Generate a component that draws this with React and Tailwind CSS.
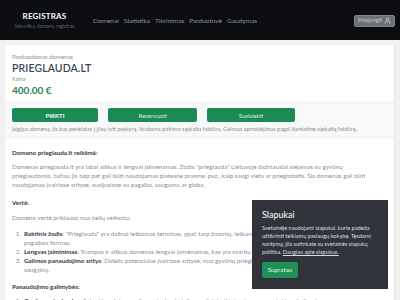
import React from "react";

function UserIcon() {
  return (
    <svg width="7" height="7" viewBox="0 0 16 16" fill="none" stroke="currentColor" strokeWidth="2">
      <circle cx="8" cy="5" r="3" />
      <path d="M2.5 15v-1.5a4 4 0 0 1 4-4h3a4 4 0 0 1 4 4V15" />
    </svg>
  );
}

function Item({ n, term, text, cont }) {
  return (
    <div className="flex">
      <span className="w-[12px] shrink-0 text-right pr-[3px]">{n}.</span>
      <div>
        <span className="font-bold text-[#2f3a48]">{term}</span>: {text}
        {cont && <div>{cont}</div>}
      </div>
    </div>
  );
}

export default function App() {
  return (
    <div
      className="w-[400px] h-[300px] overflow-hidden bg-[#f1f1ef] relative"
      style={{ fontFamily: "Lato, 'Noto Sans', sans-serif" }}
    >
      <header className="h-[40px] bg-[#0b0d11] flex items-center">
        <div className="ml-[11px] w-[67px] flex flex-col items-center">
          <div className="text-[8px] leading-[10px] font-bold text-white tracking-[0.2px]">REGISTRAS</div>
          <div className="mt-[2px] text-[5px] leading-[6px] text-[#5d646c] whitespace-nowrap">lietuviškų domenų registras</div>
        </div>
        <nav className="ml-[15px] mt-[1px] flex gap-[5px] text-[6.5px] text-[#8e959c]">
          <span>Domenai</span>
          <span>Statistika</span>
          <span>Tikrinimas</span>
          <span>Parduotuvė</span>
          <span>Gaudymas</span>
        </nav>
        <div className="ml-auto mr-[5px] mt-[1px] h-[12px] px-[3px] bg-[#6c7177] rounded-[2px] flex items-center gap-[2px] text-[5.5px] text-[#c9ccd0] border border-[#80858b]">
          <span>Prisijungti</span>
          <UserIcon />
        </div>
      </header>

      <div className="px-[5px] pt-[5px]">
        <div className="bg-white border-r border-[#e4e4e2] h-[260px]">
          <div className="px-[7px] pt-[8px]">
            <div className="text-[6px] leading-[8px] text-[#8a9097]">Parduodamas domenas</div>
            <div className="text-[10.5px] leading-[14px] font-semibold text-[#3a4656] tracking-[0.1px]">PRIEGLAUDA.LT</div>
            <div className="mt-[1px] text-[5.5px] leading-[7px] text-[#8a9097]">Kaina</div>
            <div className="text-[10px] leading-[14px] font-bold text-[#1f8350]">400.00 €</div>
          </div>
          <div className="mt-[4px] bg-[#f7f8f9] px-[7px] pt-[7px] pb-[6px]">
            <div className="flex gap-[10px]">
              <div className="w-[86px] h-[14px] bg-[#1c8a55] rounded-[2px] flex items-center justify-center text-[6px] font-bold text-white">PIRKTI</div>
              <div className="w-[89px] h-[14px] bg-[#1c8a55] rounded-[2px] flex items-center justify-center text-[6px] text-[#d8efe2]">Rezervuoti</div>
              <div className="w-[88px] h-[14px] bg-[#1c8a55] rounded-[2px] flex items-center justify-center text-[6px] text-[#d8efe2]">Susisiekti</div>
            </div>
            <div className="mt-[3px] text-[5.6px] leading-[8px] text-[#8a9097] whitespace-nowrap">
              Įsigijus domeną, jis bus perleistas į jūsų ivtt paskyrą. Išrašoma pirkimo sąskaita faktūra. Galimas apmokėjimas pagal išankstinę sąskaitą faktūrą.
            </div>
          </div>
          <div className="px-[7px] text-[6.3px] leading-[9px] text-[#8a9097]">
            <div className="mt-[9px] font-bold text-[#2f3a48]">Domeno prieglauda.lt reikšmė:</div>
            <div className="mt-[5px] whitespace-nowrap">
              <div>Domenas prieglauda.lt yra labai aiškus ir lengvai įsimenamas. Žodis "prieglauda" Lietuvoje dažniausiai siejamas su gyvūnų</div>
              <div>prieglaudomis, tačiau jis taip pat gali būti naudojamas platesne prasme, pvz., kaip saugi vieta ar prieglobstis. Šis domenas gali būti</div>
              <div>naudojamas įvairiose srityse, susijusiose su pagalba, saugumu ar globa.</div>
            </div>
            <div className="mt-[9px] font-bold text-[#2f3a48]">Vertė:</div>
            <div className="mt-[6px]">Domeno vertė priklauso nuo kelių veiksnių:</div>
            <div className="mt-[7px] whitespace-nowrap">
              <Item n="1" term="Raktinis žodis" text={'"Prieglauda" yra dažnai ieškomas terminas, ypač tarp žmonių, ieškančių informacijos apie gyvūnus ar kitas'} cont="pagalbos formas." />
              <Item n="2" term="Lengvas įsiminimas" text="Trumpas ir aiškus domenas lengvai įsimenamas, kas yra svarbu verslo ar organizacijos identitetui." />
              <Item n="3" term="Galimos panaudojimo sritys" text="Didelis potencialas įvairiose srityse, nuo gyvūnų prieglaudų iki socialinių paslaugų ar" cont="saugyklų." />
            </div>
            <div className="mt-[8px] font-bold text-[#2f3a48]">Panaudojimo galimybės:</div>
            <div className="mt-[5px] whitespace-nowrap">
              <Item n="1" term="Gyvūnų prieglaudos" text="Sukurti svetainę gyvūnų prieglaudų informacijai, įvaikinimui, savanorystei ir aukojimui." />
            </div>
          </div>
        </div>
      </div>

      <div className="absolute left-[252px] top-[200px] w-[136px] h-[89px] bg-[#30343a] px-[10px] pt-[9px]">
        <div className="text-[9px] leading-[12px] text-white">Slapukai</div>
        <div className="mt-[3px] text-[5.6px] leading-[8px] text-[#dcdde0] whitespace-nowrap">
          <div>Svetainėje naudojami slapukai, kurie padeda</div>
          <div>užtikrinti teikiamų paslaugų kokybę. Tęsdami</div>
          <div>naršymą, jūs sutinkate su svetainės slapukų</div>
          <div>politika. <span className="underline">Daugiau apie slapukus.</span></div>
        </div>
        <div className="mt-[6px] w-[36px] h-[16px] bg-[#1f9156] rounded-[2px] flex items-center justify-center text-[6.3px] text-[#e3f3ea]">Supratau</div>
      </div>
    </div>
  );
}
